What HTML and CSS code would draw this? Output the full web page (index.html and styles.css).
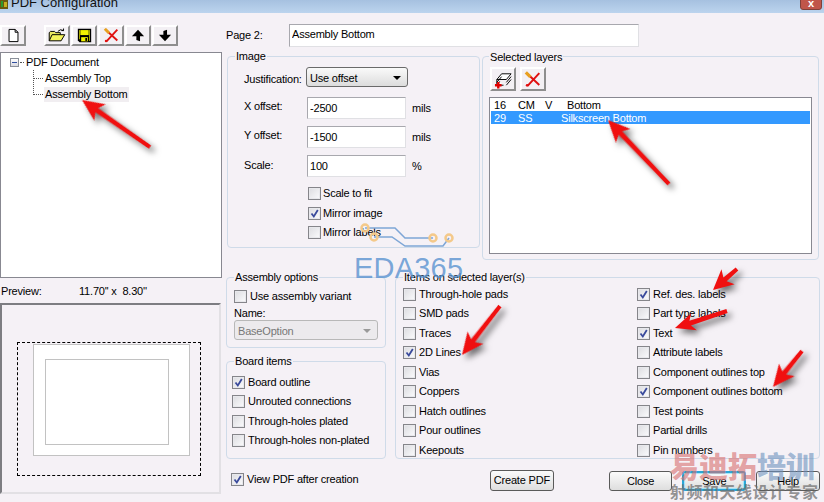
FILE: index.html
```html
<!DOCTYPE html>
<html>
<head>
<meta charset="utf-8">
<title>PDF Configuration</title>
<link rel="stylesheet" href="styles.css">
</head>
<body>
<div class="dialog">
  <header class="titlebar">
    <svg class="appicon" width="8" height="9" viewBox="0 0 8 9"><rect width="8" height="9" fill="#6b5a10"/><rect x="1" y="1" width="2" height="6" fill="#2e9a2e"/><rect x="4" y="2" width="3" height="5" fill="#c8b020"/></svg>
    <span class="titletext">PDF Configuration</span>
    <span class="closebtn">x</span>
  </header>
  <div class="content">
    <aside class="leftcol">
      <div class="toolbar">
        <button class="tool">
          <svg width="13" height="15" viewBox="0 0 16 18"><path d="M2.500 1.500H10L13.500 5V16.500H2.500Z M10 1.500V5H13.500" fill="#fff" stroke="#000" stroke-width="1.200"/></svg>
        </button>
        <span class="toolgroup">
          <button class="tool">
            <svg width="18" height="15" viewBox="0 0 22 18"><path d="M1.500 15.500V5.500L3 4H8L9.500 5.500H15V8" fill="#e8e860" stroke="#000" stroke-width="1.200"/><path d="M1.500 15.500L5 8H20.500L16 15.500Z" fill="#f2f25a" stroke="#000" stroke-width="1.200"/><path d="M12 4Q15 0.500 19 3M19 3V0.500M19 3H16.500" fill="none" stroke="#000" stroke-width="1.200"/></svg>
          </button>
          <button class="tool">
            <svg width="15" height="15" viewBox="0 0 18 18"><path d="M1 1H17V17H3L1 15Z" fill="#000"/><rect x="4" y="2.500" width="10" height="6" fill="#f4f400"/><rect x="2.500" y="2.500" width="1" height="11" fill="#c8c800"/><rect x="14.500" y="2.500" width="1" height="13" fill="#c8c800"/><rect x="5" y="11" width="8" height="5" fill="#f4f400"/><rect x="10" y="12" width="2" height="3.500" fill="#000"/></svg>
          </button>
          <button class="tool">
            <svg width="17" height="15" viewBox="0 0 20 18"><path d="M4 3L17 15M17 2L4 16" stroke="#e01010" stroke-width="2.200" fill="none"/><path d="M2 1L7 6" stroke="#e8a020" stroke-width="3.500"/><circle cx="3.500" cy="15.500" r="1.500" fill="#e01010"/></svg>
          </button>
          <button class="tool">
            <svg width="14" height="13" viewBox="0 0 16 16"><path d="M8 1L15.500 9H10.500V15L6 13.500V9H0.500Z" fill="#000"/></svg>
          </button>
          <button class="tool">
            <svg width="14" height="13" viewBox="0 0 16 16"><path d="M8 15L15.500 7H10.500V1L6 2.500V7H0.500Z" fill="#000"/></svg>
          </button>
        </span>
      </div>
      <div class="tree">
        <div class="treeroot"><span class="expander"></span><span class="stub"></span><span>PDF Document</span></div>
        <div class="children">
          <div class="leaf"><span class="stubleaf"></span><span class="leaftext">Assembly Top</span></div>
          <div class="leaf"><span class="stubleaf"></span><span class="leaftext sel">Assembly Bottom</span></div>
        </div>
      </div>
      <div class="prevhead"><span class="prevlabel">Preview:</span><span>11.70'' x&nbsp; 8.30''</span></div>
      <div class="preview">
        <div class="dashed"><div class="sheet"><div class="inner"></div></div></div>
      </div>
    </aside>
    <main class="rightcol">
      <div class="pagerow">
        <span class="pagelabel">Page 2:</span>
        <input class="field pagefield" value="Assembly Bottom" readonly>
      </div>
      <div class="midrow">
        <section class="group imagegroup">
          <div class="legend">Image</div>
          <div class="imageform">
            <span class="flabel">Justification:</span>
            <div class="select just"><span>Use offset</span><i class="caret"></i></div>
            <span></span>
            <span class="flabel">X offset:</span>
            <input class="field num" value="-2500" readonly>
            <span class="flabel">mils</span>
            <span class="flabel">Y offset:</span>
            <input class="field num" value="-1500" readonly>
            <span class="flabel">mils</span>
            <span class="flabel">Scale:</span>
            <input class="field num" value="100" readonly>
            <span class="flabel pct">%</span>
          </div>
          <div class="imagechecks">
            <label class="check"><span class="box"></span>Scale to fit</label>
            <label class="check"><span class="box"><svg class="tick" viewBox="0 0 11 11"><path d="M2.500 5.500L4.800 8.500L8.800 2" /></svg></span>Mirror image</label>
            <label class="check"><span class="box"></span>Mirror labels</label>
          </div>
        </section>
        <section class="group selgroup">
          <div class="legend">Selected layers</div>
          <div class="seltools">
            <button class="tool">
              <svg width="19" height="19" viewBox="0 0 20 20"><path d="M3 10L8 4H18L13 10ZM3 13L8 7M13 13L18 7M3 16L6 12M13 16L18 10M3 10V16H10" fill="#fff" stroke="#000"/><path d="M1 16H8M4.500 12.500V19.500" stroke="#e00000" stroke-width="2.500"/></svg>
            </button>
            <button class="tool">
              <svg width="18" height="17" viewBox="0 0 20 18"><path d="M4 3L17 15M17 2L4 16" stroke="#e01010" stroke-width="2.200" fill="none"/><path d="M2 1L7 6" stroke="#e8a020" stroke-width="3.500"/><circle cx="3.500" cy="15.500" r="1.500" fill="#e01010"/></svg>
            </button>
          </div>
          <div class="layerlist">
            <div class="layer"><span>16</span><span>CM</span><span>V</span><span class="lname">Bottom</span></div>
            <div class="layer active"><span>29</span><span>SS</span><span></span><span>Silkscreen Bottom</span></div>
          </div>
        </section>
      </div>
      <div class="lowrow">
        <div class="stack">
          <section class="group assembly">
            <div class="legend">Assembly options</div>
            <label class="check"><span class="box"></span>Use assembly variant</label>
            <div class="namelabel">Name:</div>
            <div class="select disabled"><span>BaseOption</span><i class="caret"></i></div>
          </section>
          <section class="group board">
            <div class="legend">Board items</div>
            <label class="check"><span class="box"><svg class="tick" viewBox="0 0 11 11"><path d="M2.500 5.500L4.800 8.500L8.800 2" /></svg></span>Board outline</label>
            <label class="check"><span class="box"></span>Unrouted connections</label>
            <label class="check"><span class="box"></span>Through-holes plated</label>
            <label class="check"><span class="box"></span>Through-holes non-plated</label>
          </section>
          <label class="check viewpdf"><span class="box"><svg class="tick" viewBox="0 0 11 11"><path d="M2.500 5.500L4.800 8.500L8.800 2" /></svg></span>View PDF after creation</label>
        </div>
        <div class="itemscol">
          <section class="group items">
            <div class="legend">Items on selected layer(s)</div>
            <div class="itemgrid">
              <label class="check"><span class="box"></span>Through-hole pads</label>
              <label class="check"><span class="box"></span>SMD pads</label>
              <label class="check"><span class="box"></span>Traces</label>
              <label class="check"><span class="box"><svg class="tick" viewBox="0 0 11 11"><path d="M2.500 5.500L4.800 8.500L8.800 2" /></svg></span>2D Lines</label>
              <label class="check"><span class="box"></span>Vias</label>
              <label class="check"><span class="box"></span>Coppers</label>
              <label class="check"><span class="box"></span>Hatch outlines</label>
              <label class="check"><span class="box"></span>Pour outlines</label>
              <label class="check"><span class="box"></span>Keepouts</label>
              <label class="check"><span class="box"><svg class="tick" viewBox="0 0 11 11"><path d="M2.500 5.500L4.800 8.500L8.800 2" /></svg></span>Ref. des. labels</label>
              <label class="check"><span class="box"></span>Part type labels</label>
              <label class="check"><span class="box"><svg class="tick" viewBox="0 0 11 11"><path d="M2.500 5.500L4.800 8.500L8.800 2" /></svg></span>Text</label>
              <label class="check"><span class="box"></span>Attribute labels</label>
              <label class="check"><span class="box"></span>Component outlines top</label>
              <label class="check"><span class="box"><svg class="tick" viewBox="0 0 11 11"><path d="M2.500 5.500L4.800 8.500L8.800 2" /></svg></span>Component outlines bottom</label>
              <label class="check"><span class="box"></span>Test points</label>
              <label class="check"><span class="box"></span>Partial drills</label>
              <label class="check"><span class="box"></span>Pin numbers</label>
            </div>
          </section>
          <div class="actions">
            <button class="btn create">Create PDF</button>
            <button class="btn close">Close</button>
            <button class="btn save">Save</button>
            <button class="btn help">Help</button>
          </div>
        </div>
      </div>
    </main>
  </div>

  <svg class="overlay" width="824" height="502" viewBox="0 0 824 502">
    <g class="circuit">
      <path d="M365 228H395L405 238H433M374 237H392L405 246H443L449 238" fill="none" stroke="#7ea6d6" stroke-width="1.500"/>
      <g fill="none" stroke="#f4c98a" stroke-width="2.500">
        <circle cx="365" cy="228" r="3.500"/><circle cx="374" cy="237" r="3.500"/><circle cx="433" cy="238" r="3.500"/><circle cx="449" cy="238" r="3.500"/>
      </g>
    </g>
    <g class="arrows">
      <path transform="translate(82 100) rotate(34.7)" d="M0 0L22 -10L18 -2.500L82.700 -2V2L18 2.500L22 10Z"/>
      <path transform="translate(608 120) rotate(46.400)" d="M0 0L22 -10L18 -2.500L88.400 -2V2L18 2.500L22 10Z"/>
      <path transform="translate(713 290) rotate(-41.200)" d="M0 0L20 -10L16 -2.500L31.900 -2V2L16 2.500L20 10Z"/>
      <path transform="translate(675 328) rotate(-18.100)" d="M0 0L20 -9L16 -2.500L54.700 -2V2L16 2.500L20 9Z"/>
      <path transform="translate(462 355) rotate(-52.200)" d="M0 0L22 -10L18 -2.500L62 -2V2L18 2.500L22 10Z"/>
      <path transform="translate(773 387) rotate(-51.100)" d="M0 0L22 -10L18 -2.500L46.200 -2V2L18 2.500L22 10Z"/>
    </g>
  </svg>
  <div class="mark-eda">EDA365</div>
  <div class="mark-cn"><span class="red">易迪拓</span><span class="blue">培训</span></div>
  <div class="mark-sub">射频和天线设计专家</div>
</div>
</body>
</html>
```
FILE: styles.css
```css
* { box-sizing: border-box; }
html, body { margin: 0; padding: 0; }
body { width: 824px; height: 502px; overflow: hidden; }

.dialog {
  position: relative;
  width: 824px;
  height: 502px;
  overflow: hidden;
  background: #f5f1f6;
  color: #000;
  font: 11px/13px "Liberation Sans", Arial, sans-serif;
  letter-spacing: -.2px;
}

/* title bar */
.titlebar {
  position: relative;
  display: flex;
  align-items: flex-end;
  height: 13px;
  overflow: hidden;
  background: linear-gradient(#a6c1e0, #bcd4ee);
}
.appicon { margin: 0 3px 4px 0; flex: none; }
.titletext { font-size: 13px; line-height: 16px; margin-bottom: 2px; color: #111; letter-spacing: 0; }
.closebtn {
  position: absolute;
  right: 2px;
  top: -1px;
  width: 22px;
  height: 11px;
  background: #c0554a;
  border: 1px solid #80403a;
  border-radius: 0 0 3px 3px;
  color: #fff;
  font: bold 11px/7px "Liberation Sans", sans-serif;
  text-align: center;
}

.content { display: flex; height: 489px; }

/* left column */
.leftcol { width: 226px; flex: none; }
.toolbar { display: flex; height: 39px; padding: 12px 0 0 0; }
.toolgroup { display: flex; gap: 1px; margin-left: 18px; }
.tool {
  display: flex;
  align-items: center;
  justify-content: center;
  width: 26px;
  height: 21px;
  padding: 0;
  background: #f3f0f4;
  border: 2px solid;
  border-color: #fff #8e8e8e #8e8e8e #fff;
}
.tool svg { display: block; flex: none; }

.tree {
  width: 222px;
  height: 226px;
  background: #fff;
  border: 1px solid #888891;
  padding: 1px 0 0 9px;
}
.treeroot { display: flex; align-items: center; height: 16px; }
.expander {
  position: relative;
  width: 9px;
  height: 9px;
  border: 1px solid #8a8f99;
  background: linear-gradient(#fff, #d8d8e0);
  flex: none;
}
.expander::after {
  content: "";
  position: absolute;
  left: 1px;
  top: 3px;
  width: 5px;
  height: 1px;
  background: #3050a0;
}
.stub { width: 4px; height: 1px; margin: 0 2px 0 1px; border-top: 1px dotted #555; flex: none; }
.children {
  margin-left: 23px;
  background: repeating-linear-gradient(#555 0 1px, transparent 1px 2px) 0 0 / 1px 25px no-repeat;
}
.leaf { display: flex; align-items: center; height: 16px; }
.stubleaf { width: 10px; height: 1px; margin-right: 1px; border-top: 1px dotted #555; flex: none; }
.leaftext { padding: 1px; line-height: 13px; }
.leaftext.sel { background: #f1eef1; }

.prevhead { display: flex; height: 25px; padding: 7px 0 0 1px; white-space: nowrap; }
.prevlabel { width: 78px; flex: none; }

.preview {
  display: flex;
  justify-content: center;
  width: 221px;
  height: 191px;
  padding-top: 37px;
  padding-right: 3px;
  border: 2px solid;
  border-color: #7d7d82 #e2e0e4 #e2e0e4 #7d7d82;
}
.dashed {
  width: 184px;
  height: 134px;
  border: 1px dashed #000;
  padding: 1px 0 0 15px;
}
.sheet {
  width: 157px;
  height: 112px;
  background: #fff;
  border: 1px solid #c2c2c2;
  padding: 14px 0 0 11px;
}
.inner {
  width: 124px;
  height: 86px;
  background: #fff;
  border: 1px solid #c2c2c2;
}

/* right column */
.rightcol { width: 598px; flex: none; }
.pagerow { display: flex; align-items: center; height: 43px; }
.pagelabel { width: 63px; flex: none; padding-top: 1px; }
.field {
  display: block;
  font: 11px/13px "Liberation Sans", Arial, sans-serif;
  letter-spacing: -.2px;
  color: #000;
  background: #fff;
  border: 1px solid;
  border-color: #a8a8ae #e0e0e4 #e0e0e4 #a8a8ae;
  padding: 0 2px 3px 2px;
  outline: none;
  margin: 0;
}
.pagefield { width: 350px; height: 23px; margin-top: 1px; }

.midrow { display: flex; align-items: flex-start; height: 221px; padding-left: 1px; }
.group {
  border: 1px solid #cfdbe9;
  border-radius: 4px;
}
.legend {
  width: fit-content;
  height: 13px;
  margin: -7px 0 0 7px;
  padding: 0 1px;
  background: #f5f1f6;
}
.imagegroup { width: 253px; height: 192px; }
.imageform {
  display: grid;
  grid-template-columns: 63px 99px auto;
  grid-template-rows: 23px 22px 22px 22px;
  row-gap: 7px;
  margin: 4px 0 0 16px;
}
.flabel { align-self: center; white-space: nowrap; }
.imageform > .flabel:nth-child(3n) { padding-left: 6px; }
.imageform > .flabel:nth-child(1) { align-self: start; padding-top: 6px; }
.imageform > .flabel:nth-child(4) { margin-top: -4px; }
.imageform > .flabel:nth-child(7) { margin-top: -3px; }
.imageform > .flabel:nth-child(10) { margin-top: -2px; }
.pct { padding-left: 8px; }
.num { width: 99px; height: 22px; padding-bottom: 1px; }

.select {
  display: flex;
  align-items: center;
  justify-content: space-between;
  width: 102px;
  height: 20px;
  margin-left: -1px;
  padding: 2px 4px 0 3px;
  border: 1px solid #6a6a6a;
  border-radius: 3px;
  background: linear-gradient(#fafafa, #dcdcdc);
}
.caret {
  width: 0;
  height: 0;
  border: 4px solid transparent;
  border-top: 4px solid #000;
  border-bottom: 0;
  margin-right: 2px;
}
.select.disabled {
  width: 144px;
  height: 20px;
  border-color: #b8b8b8;
  background: #eceaed;
  color: #777;
}
.select.disabled .caret { border-top-color: #999; }

.check {
  display: flex;
  align-items: center;
  height: 19.500px;
  white-space: nowrap;
}
.box {
  display: block;
  flex: none;
  width: 13px;
  height: 13px;
  margin-right: 3px;
  border: 1px solid #85858a;
  background: linear-gradient(135deg, #dcdce0, #fbfbfd);
  box-shadow: inset 0 0 0 1px #e8e8ec;
}
.tick { display: block; width: 11px; height: 11px; }
.tick path { fill: none; stroke: #3a4a9c; stroke-width: 1.800; }

.imagechecks { margin: 7px 0 0 80px; }
.imagechecks .box { margin-right: 2px; }

.selgroup { width: 337px; height: 204px; margin-left: 2px; }
.selgroup .legend { margin: -6px 0 0 6px; }
.seltools { display: flex; gap: 4px; padding: 3px 0 0 7px; }
.seltools .tool { height: 24px; }
.layerlist {
  width: 323px;
  height: 157px;
  margin: 6px 0 0 6px;
  padding: 0 1px;
  background: #fff;
  border: 1px solid #888891;
}
.layer {
  display: grid;
  grid-template-columns: 24px 27px 16px 1fr;
  height: 13px;
  line-height: 15px;
  padding-left: 3px;
  white-space: nowrap;
}
.layer.active { background: #3399ff; color: #fff; }
.lname { padding-left: 6px; }

.lowrow { display: flex; gap: 9px; }
.stack { width: 160px; flex: none; }
.assembly { width: 160px; height: 71px; }
.assembly .check { height: 17px; margin: 4px 0 0 7px; }
.namelabel { margin: 2px 0 0 7px; height: 13px; }
.assembly .select { margin: 0 0 0 7px; }
.board { width: 160px; height: 98px; margin-top: 13px; padding: 7.500px 0 0 5px; }
.board .legend { margin: -14.500px 0 4.500px 2px; }
.viewpdf { margin: 11px 0 0 5px; }

.itemscol { width: 425px; flex: none; }
.items { height: 182px; }
.itemgrid {
  display: grid;
  grid-template-columns: 234px 1fr;
  grid-template-rows: repeat(9, 19.500px);
  grid-auto-flow: column;
  padding: 0 0 0 7px;
  margin-top: .500px;
}

.actions { display: flex; margin-top: 12px; }
.btn {
  height: 20px;
  width: 65px;
  padding: 0;
  font: 11px/13px "Liberation Sans", Arial, sans-serif;
  letter-spacing: -.2px;
  color: #000;
  border: 1px solid #5a5a5a;
  border-radius: 3px;
  background: linear-gradient(#fbfbfb, #dedede);
}
.create { margin-left: 95px; height: 21px; margin-top: -1px; }
.close { margin-left: 55px; }
.save {
  margin-left: 10px;
  border: 2px solid #2aa6d8;
  box-shadow: inset 0 0 1px 1px #9fe4f8;
}
.help { margin-left: 10px; }

/* overlays */
.overlay { position: absolute; left: 0; top: 0; pointer-events: none; }
.arrows { filter: drop-shadow(4px 4px 3px rgba(0,0,0,.55)); }
.arrows path { fill: #f01010; }
.mark-eda {
  position: absolute;
  left: 354px;
  top: 252px;
  font: 29px/33px "Liberation Sans", Arial, sans-serif;
  letter-spacing: .2px;
  color: rgba(88,146,208,.8);
  pointer-events: none;
}
.mark-cn {
  position: absolute;
  left: 670px;
  top: 448px;
  font: 900 29px/34px "Noto Sans CJK SC", sans-serif;
  letter-spacing: 0;
  white-space: nowrap;
}
.mark-cn .red { color: rgba(216,110,110,.62); }
.mark-cn .blue { color: rgba(110,145,190,.62); }
.mark-sub {
  position: absolute;
  left: 670px;
  top: 481px;
  font: 700 16px/21px "Noto Sans CJK SC", sans-serif;
  letter-spacing: .5px;
  white-space: nowrap;
  color: rgba(110,110,110,.72);
}
```
